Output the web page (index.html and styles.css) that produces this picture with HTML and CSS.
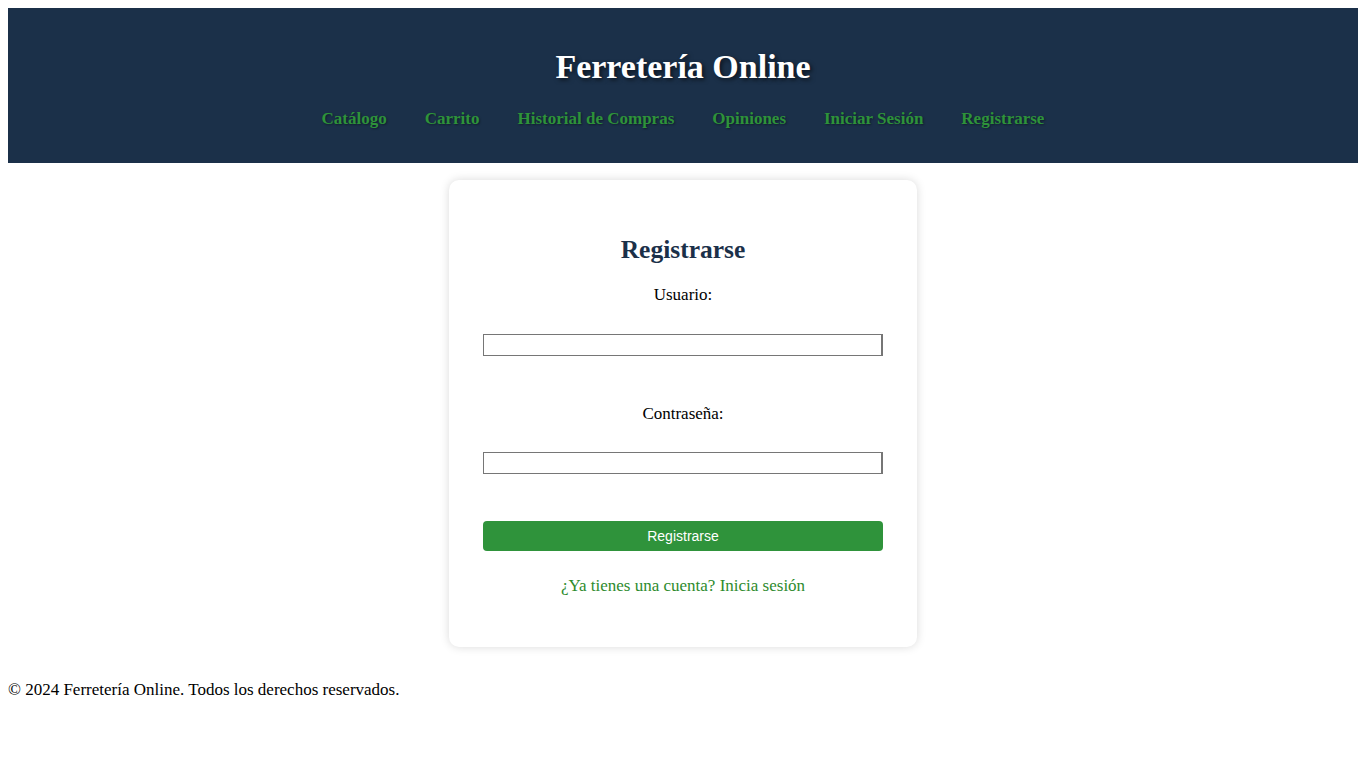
FILE: index.html
```html
<!DOCTYPE html>
<html lang="es">
<head>
<meta charset="utf-8">
<title>Registrarse - Ferretería Online</title>
<link rel="stylesheet" href="styles.css">
</head>
<body>
<header class="site-header">
  <h1 class="site-title">Ferretería Online</h1>
  <nav>
    <ul class="nav-list">
      <li><a href="#">Catálogo</a></li>
      <li><a href="#">Carrito</a></li>
      <li><a href="#">Historial de Compras</a></li>
      <li><a href="#">Opiniones</a></li>
      <li><a href="#">Iniciar Sesión</a></li>
      <li><a href="#">Registrarse</a></li>
    </ul>
  </nav>
</header>
<main class="main">
  <section class="card">
    <h2 class="card-title">Registrarse</h2>
    <form class="form">
      <label class="field-label" for="usuario">Usuario:</label>
      <input class="field-input first" type="text" id="usuario">
      <label class="field-label" for="pass">Contraseña:</label>
      <input class="field-input second" type="password" id="pass">
      <button class="submit" type="button">Registrarse</button>
    </form>
    <p class="alt"><a href="#">¿Ya tienes una cuenta? Inicia sesión</a></p>
  </section>
</main>
<footer class="site-footer">© 2024 Ferretería Online. Todos los derechos reservados.</footer>
</body>
</html>
```
FILE: styles.css
```css
body {
  margin: 8px;
  font-family: "Liberation Serif", "Times New Roman", serif;
  font-size: 17px;
  color: #000;
  background: #fff;
}
.site-header {
  background: #1b3049;
  padding: 20px;
  text-align: center;
}
.site-title {
  margin: 20px 0 0;
  font-size: 34px;
  line-height: 37px;
  color: #fff;
  text-shadow: 2px 2px 4px rgba(0, 0, 0, 0.6);
}
.nav-list {
  list-style: none;
  padding: 0;
  margin: 25px 0 15px;
  display: flex;
  justify-content: center;
  gap: 38px;
  line-height: 18px;
}
.nav-list a {
  color: #2e933a;
  font-weight: bold;
  text-decoration: none;
  text-shadow: 1px 1px 2px rgba(0, 0, 0, 0.4);
}
.main {
  display: flex;
  justify-content: center;
  margin-top: 17px;
}
.card {
  width: 400px;
  padding: 36px 34px 33px;
  background: #fff;
  border-radius: 10px;
  box-shadow: 0 0 10px rgba(0, 0, 0, 0.15);
  text-align: center;
}
.card-title {
  margin: 20px 0 20px;
  font-size: 25.5px;
  line-height: 28px;
  color: #1b3049;
}
.form {
  display: flex;
  flex-direction: column;
}
.field-label {
  display: block;
  line-height: 18px;
  margin-top: 2px;
}
.field-input {
  width: 400px;
  height: 22px;
  box-sizing: border-box;
  border: 1px solid #767676;
  border-right-width: 2px;
  padding: 1px 2px;
  font-size: 13px;
}
.field-input.first {
  margin: 30px 0 47px;
}
.field-input.second {
  margin: 29px 0 47px;
}
.submit {
  height: 30px;
  width: 400px;
  border: none;
  border-radius: 4px;
  background: #2f933b;
  color: #fff;
  font-family: "Liberation Sans", Arial, sans-serif;
  font-size: 14px;
  padding: 0;
  cursor: pointer;
}
.alt {
  margin: 26px 0 19px;
  line-height: 18px;
}
.alt a {
  color: #2e8b2e;
  text-decoration: none;
}
.site-footer {
  margin-top: 34px;
  line-height: 18px;
}
```
